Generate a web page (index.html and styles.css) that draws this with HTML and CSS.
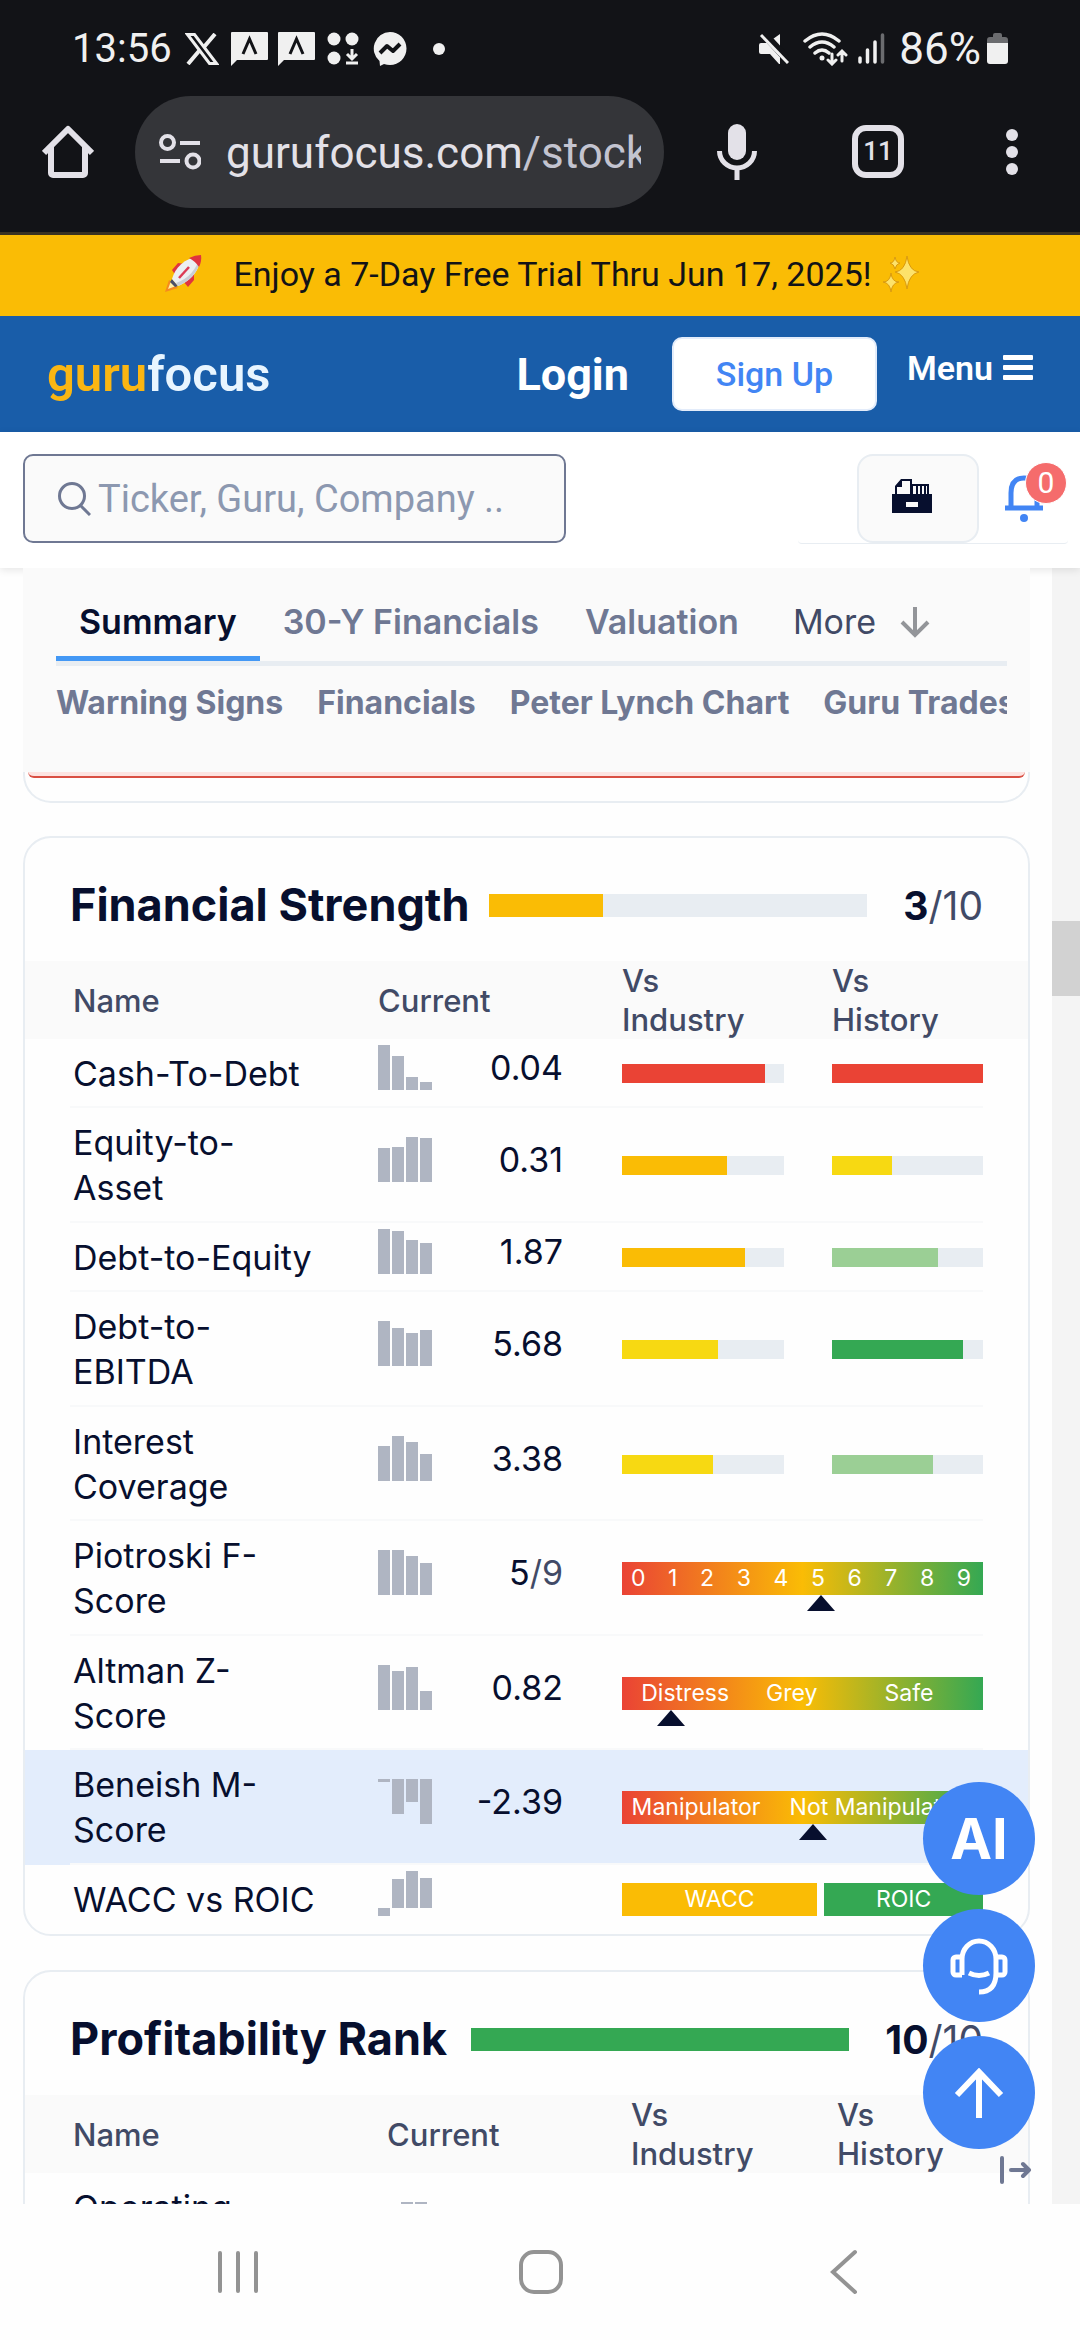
FILE: index.html
```html
<!DOCTYPE html>
<html lang="en">
<head>
    <meta charset="UTF-8">
    <meta name="viewport" content="width=device-width, initial-scale=1.0">
    <title>GuruFocus - Stock Summary</title>
    <link rel="stylesheet" href="styles.css">
</head>
<body>
    <!-- Status bar -->
    <div class="status-bar">
        <span class="time">13:56</span>
        <svg class="st-x" width="34" height="32" viewBox="0 0 34 32"><path fill="none" stroke="#f0f0f0" stroke-width="3" d="M2.500 1.500h7L31.500 30.500h-7z"/><path stroke="#f0f0f0" stroke-width="4" d="M30 1L19 14M14 18L3 31"/></svg>
        <svg class="st-chat" width="37" height="34" viewBox="0 0 37 34"><path fill="#f0f0f0" d="M1 0h35a1 1 0 011 1v26a1 1 0 01-1 1H6L0 34V1a1 1 0 011-1z"/><path fill="none" stroke="#121317" stroke-width="3" d="M12 22l6.500-15L25 22"/></svg>
        <svg class="st-chat" width="37" height="34" viewBox="0 0 37 34"><path fill="#f0f0f0" d="M1 0h35a1 1 0 011 1v26a1 1 0 01-1 1H6L0 34V1a1 1 0 011-1z"/><path fill="none" stroke="#121317" stroke-width="3" d="M12 22l6.500-15L25 22"/></svg>
        <svg class="st-dots" width="32" height="33" viewBox="0 0 32 33"><g fill="#f0f0f0"><circle cx="7" cy="7" r="6.500"/><circle cx="25" cy="7" r="6.500"/><circle cx="7" cy="26" r="6.500"/></g><path fill="none" stroke="#f0f0f0" stroke-width="3" d="M25 17v10M20 22l5 5 5-5M19 31h12"/></svg>
        <svg class="st-msg" width="34" height="34" viewBox="0 0 34 34"><path fill="#f0f0f0" d="M17 0a16.500 16.500 0 110 33c-2 0-4-.4-6-1l-4 2-.5-5A16.500 16.500 0 0117 0z"/><path fill="none" stroke="#121317" stroke-width="4" stroke-linejoin="round" d="M7 21l7-7 6 5 7-7"/></svg>
        <i class="st-more"></i>
        <span class="spacer"></span>
        <svg class="st-mute" width="30" height="31" viewBox="0 0 30 31"><path fill="#f0f0f0" d="M0 12a2 2 0 012-2h6l13 13v8h-1l-9-10H2a2 2 0 01-2-2zM21 1v14L12.500 7z"/><path stroke="#121317" stroke-width="8" d="M4 0l25 27"/><path stroke="#f0f0f0" stroke-width="3" d="M2 2l27 28"/></svg>
        <svg class="st-wifi" width="45" height="34" viewBox="0 0 45 34"><g fill="none" stroke="#f0f0f0" stroke-width="3.500" stroke-linecap="round"><path d="M2 9q17-14 34 0M7 15q12-10 24 0M12 21q7-6 14 0"/><path d="M29 22v9M25 28l4 4 4-4M39 29v-9M35 23l4-4 4 4" stroke-width="3"/></g><circle cx="19" cy="26" r="2.500" fill="#f0f0f0"/></svg>
        <svg class="st-signal" width="28" height="31" viewBox="0 0 28 31"><g stroke="#f0f0f0" stroke-width="3.500" stroke-linecap="round"><path d="M3 25v4M10.500 17v12M18 9v20"/><path stroke="#6b6c6f" d="M25.500 2v27"/></g></svg>
        <span class="battery-text">86%</span>
        <svg width="21" height="32" viewBox="0 0 21 32"><path fill="#6b6c6f" d="M6 2a2 2 0 012-2h5a2 2 0 012 2v2h3a3 3 0 013 3v3H0V7a3 3 0 013-3h3z"/><path fill="#f0f0f0" d="M0 10h21v18a3 3 0 01-3 3H3a3 3 0 01-3-3z"/></svg>
    </div>

    <!-- Browser toolbar -->
    <div class="toolbar">
        <button class="tool-btn" aria-label="Home"><svg width="52" height="54" viewBox="0 0 52 54"><path fill="none" stroke="#e3e1e8" stroke-width="6" stroke-linejoin="round" d="M2 28L26 4l24 24M9 22v26a2 2 0 002 2h30a2 2 0 002-2V22"/></svg></button>
        <button class="url-bar">
            <svg width="42" height="38" viewBox="0 0 42 38"><g fill="none" stroke="#e3e1e8" stroke-width="4"><circle cx="8.500" cy="9.500" r="6.500"/><path d="M21 10h20M1 28h20"/><circle cx="34" cy="28" r="6.500"/></g></svg>
            <span class="url-text">gurufocus.com<span class="path">/stock/</span></span>
        </button>
        <button class="tool-btn mic" aria-label="Voice search"><svg width="40" height="56" viewBox="0 0 40 56"><rect x="11" y="0" width="18" height="36" rx="9" fill="#e3e1e8"/><path fill="none" stroke="#e3e1e8" stroke-width="5" d="M2.500 27a17.500 17 0 0035 0M20 44v12"/></svg></button>
        <button class="tabs-count" aria-label="Open tabs">11</button>
        <button class="tool-btn" aria-label="More"><svg width="12" height="48" viewBox="0 0 12 48"><g fill="#e3e1e8"><circle cx="6" cy="7" r="6"/><circle cx="6" cy="24" r="6"/><circle cx="6" cy="41" r="6"/></g></svg></button>
    </div>

    <!-- Promo -->
    <a class="promo" href="#">
        <svg width="38" height="38" viewBox="0 0 38 38"><path fill="#f58a1f" d="M1 37l4-12 9 8z"/><path fill="#fff0a8" d="M4 34l3-8 5 5z"/><path fill="#e0343f" d="M8 15l6-7 7 1-9 12zM30 17v8l-6 7-5-6z"/><path fill="#4b4f68" d="M8 24l6 7-3 1-5-5z"/><path fill="#eceff2" d="M8 24C11 13 20 3 36 1c1 13-9 25-22 30z"/><path fill="#c9ced5" d="M36 1c1 13-9 25-22 30l-2-3C24 24 33 14 36 1z"/><path fill="#e0343f" d="M25 3q6-3 12-3 1 6-2 12-4-6-10-9z"/><path stroke="#dc3c55" stroke-width="2.500" d="M15 23l10-11"/></svg>
        <span>Enjoy a 7-Day Free Trial Thru Jun 17, 2025!</span>
        <svg class="sparkles" width="38" height="38" viewBox="0 0 38 38"><g fill="#fde26a" stroke="#d99a10" stroke-width="1"><path d="M25 1q2 15 12 16-10 2-12 17-2-15-12-17Q23 16 25 1zM9 18q1 9 8 9-7 1-8 10-1-9-8-10 7 0 8-9zM13 2q1 6 5 6-4 1-5 6-1-5-5-6 4 0 5-6z"/></g></svg>
    </a>

    <!-- Site nav -->
    <header class="site-nav">
        <a class="logo" href="#">guru<span>focus</span></a>
        <span class="spacer"></span>
        <a class="login" href="#">Login</a>
        <button class="signup">Sign Up</button>
        <button class="menu">Menu <svg width="30" height="26" viewBox="0 0 30 26"><g fill="#fff"><rect width="30" height="5" rx="1"/><rect y="10" width="30" height="5" rx="1"/><rect y="20" width="30" height="5" rx="1"/></g></svg></button>
    </header>

    <div class="search-row">
        <label class="search-box">
            <svg width="33" height="34" viewBox="0 0 33 34"><g fill="none" stroke="#6f7893" stroke-width="3"><circle cx="14" cy="14" r="12.500"/><path d="M22 23l10 10"/></g></svg>
            <input type="text" placeholder="Ticker, Guru, Company .." aria-label="Search">
        </label>
        <div class="quick">
            <button class="archive" aria-label="Portfolio"><svg width="40" height="36" viewBox="0 0 40 36"><path fill="#070f2e" d="M0 16h3V8l6-7h11v5h17v10h3v19H0z"/><path fill="#fafafa" d="M5 9h5V3h8v13H5zM21 8h3v8h-3zM26 8h2v8h-2zM30 8h2v8h-2zM34 8h1v8h-1zM14 24h12v5H14z"/></svg></button>
            <button class="bell" aria-label="Notifications">
                <svg width="38" height="48" viewBox="0 0 38 48"><path fill="none" stroke="#4285f4" stroke-width="5" d="M0 33h38M6 33V18Q6 3 19 3t13 15v15"/><circle cx="19" cy="43" r="4" fill="#4285f4"/></svg>
                <span class="badge">0</span>
            </button>
        </div>
    </div>

    <main class="viewport">
        <div class="page">
            <nav class="tab-panel">
                <div class="tabs">
                    <a class="tab active" href="#">Summary</a>
                    <a class="tab" href="#">30-Y Financials</a>
                    <a class="tab" href="#">Valuation</a>
                    <a class="tab more" href="#">More <svg width="30" height="31" viewBox="0 0 30 31"><path fill="none" stroke="#939599" stroke-width="4" d="M15 0v28M2 15l13 13 13-13"/></svg></a>
                </div>
                <div class="subtabs">
                    <a href="#">Warning Signs</a>
                    <a href="#">Financials</a>
                    <a href="#">Peter Lynch Chart</a>
                    <a href="#">Guru Trades</a>
                </div>
            </nav>
            <div class="card warning-card"><div class="alert"></div></div>

            <section class="card">
                <div class="card-head">
                    <h2>Financial Strength</h2>
                    <div class="bar rank"><i class="orange" style="width:30%"></i></div>
                    <span class="score"><b>3</b>/10</span>
                </div>
                <table>
                    <thead>
                        <tr><th class="c-name">Name</th><th class="c-current">Current</th><th class="c-industry">Vs<br>Industry</th><th>Vs<br>History</th></tr>
                    </thead>
                    <tbody>
                        <tr>
                            <td>Cash-To-Debt</td>
                            <td class="current"><div><svg class="spark" viewBox="0 0 54 45"><path d="M6 45V0M20 45V11M34 45V32M48 45V37"/></svg><span>0.04</span></div></td>
                            <td><div class="bar"><i class="red" style="width:88%"></i></div></td>
                            <td><div class="bar"><i class="red" style="width:100%"></i></div></td>
                        </tr>
                        <tr>
                            <td>Equity-to-<br>Asset</td>
                            <td class="current"><div><svg class="spark" viewBox="0 0 54 45"><path d="M6 45V11M20 45V10M34 45V0M48 45V1"/></svg><span>0.31</span></div></td>
                            <td><div class="bar"><i class="orange" style="width:65%"></i></div></td>
                            <td><div class="bar"><i class="yellow" style="width:40%"></i></div></td>
                        </tr>
                        <tr>
                            <td>Debt-to-Equity</td>
                            <td class="current"><div><svg class="spark" viewBox="0 0 54 45"><path d="M6 45V0M20 45V2M34 45V11M48 45V14"/></svg><span>1.87</span></div></td>
                            <td><div class="bar"><i class="orange" style="width:76%"></i></div></td>
                            <td><div class="bar"><i class="light-green" style="width:70%"></i></div></td>
                        </tr>
                        <tr>
                            <td>Debt-to-<br>EBITDA</td>
                            <td class="current"><div><svg class="spark" viewBox="0 0 54 45"><path d="M6 45V0M20 45V7M34 45V12M48 45V9"/></svg><span>5.68</span></div></td>
                            <td><div class="bar"><i class="yellow" style="width:59%"></i></div></td>
                            <td><div class="bar"><i class="green" style="width:87%"></i></div></td>
                        </tr>
                        <tr>
                            <td>Interest<br>Coverage</td>
                            <td class="current"><div><svg class="spark" viewBox="0 0 54 45"><path d="M6 45V10M20 45V0M34 45V6M48 45V18"/></svg><span>3.38</span></div></td>
                            <td><div class="bar"><i class="yellow" style="width:56%"></i></div></td>
                            <td><div class="bar"><i class="light-green" style="width:67%"></i></div></td>
                        </tr>
                        <tr>
                            <td>Piotroski F-<br>Score</td>
                            <td class="current"><div><svg class="spark" viewBox="0 0 54 45"><path d="M6 45V0M20 45V0M34 45V6M48 45V13"/></svg><span>5<em>/9</em></span></div></td>
                            <td colspan="2"><div class="scale digits"><span>0</span><span>1</span><span>2</span><span>3</span><span>4</span><span>5</span><span>6</span><span>7</span><span>8</span><span>9</span><i class="pointer" style="left:55%"></i></div></td>
                        </tr>
                        <tr>
                            <td>Altman Z-<br>Score</td>
                            <td class="current"><div><svg class="spark" viewBox="0 0 54 45"><path d="M6 45V0M20 45V6M34 45V2M48 45V26"/></svg><span>0.82</span></div></td>
                            <td colspan="2"><div class="scale zones"><span>Distress</span><span>Grey</span><span>Safe</span><i class="pointer" style="left:13.5%"></i></div></td>
                        </tr>
                        <tr class="highlight">
                            <td>Beneish M-<br>Score</td>
                            <td class="current"><div><svg class="spark" viewBox="0 0 54 45"><path d="M6 0V3M20 0V35M34 0V23M48 0V45"/></svg><span>-2.39</span></div></td>
                            <td colspan="2"><div class="scale manip"><span>Manipulator</span><span>Not Manipulator</span><i class="pointer" style="left:53%"></i></div></td>
                        </tr>
                        <tr class="last">
                            <td>WACC vs ROIC</td>
                            <td class="current"><div><svg class="spark" viewBox="0 0 54 45"><path d="M6 45V37M20 37V8M34 37V0M48 37V7"/></svg></div></td>
                            <td colspan="2"><div class="versus"><span class="orange" style="width:54%">WACC</span><span class="green" style="width:44%">ROIC</span></div></td>
                        </tr>
                    </tbody>
                </table>
            </section>

            <section class="card profitability">
                <div class="card-head">
                    <h2>Profitability Rank</h2>
                    <div class="bar rank"><i class="green" style="width:100%"></i></div>
                    <span class="score"><b>10</b>/10</span>
                </div>
                <table>
                    <thead>
                        <tr><th class="c-name">Name</th><th class="c-current">Current</th><th class="c-industry">Vs<br>Industry</th><th>Vs<br>History</th></tr>
                    </thead>
                    <tbody>
                        <tr>
                            <td>Operating<br>Margin %</td>
                            <td class="current"><div><svg class="spark" viewBox="0 0 54 45"><path d="M6 45V8M20 45V0M34 45V0M48 45V6"/></svg></div></td>
                            <td></td>
                            <td></td>
                        </tr>
                    </tbody>
                </table>
            </section>
        </div>
        <div class="scroll-track"><i></i></div>

        <!-- Floating buttons -->
        <div class="fabs">
            <button class="fab">AI</button>
            <button class="fab" aria-label="Support"><svg width="58" height="58" viewBox="0 0 58 58"><g fill="none" stroke="#fff" stroke-width="5"><path d="M12 38V22a17 18 0 0134 0v16M12 20H6a3 3 0 00-3 3v12a3 3 0 003 3h6M46 20h6a3 3 0 013 3v12a3 3 0 01-3 3h-6M46 36q0 19-17 19M19 36q10 5 20 0"/></g></svg></button>
            <button class="fab" aria-label="Back to top"><svg width="50" height="50" viewBox="0 0 50 50"><path fill="none" stroke="#fff" stroke-width="6" d="M25 50V5M3 27L25 4l22 23"/></svg></button>
            <button class="collapse" aria-label="Collapse"><svg width="32" height="28" viewBox="0 0 32 28"><path fill="none" stroke="#6f7893" stroke-width="4" stroke-linecap="round" stroke-linejoin="round" d="M2 2v24M11 14h18M23 8l6 6-6 6"/></svg></button>
        </div>
    </main>

    <!-- Android navigation -->
    <div class="android-nav">
        <button aria-label="Recents"><svg width="44" height="46" viewBox="0 0 44 46"><path stroke="#939393" stroke-width="4" stroke-linecap="round" d="M4 4v38M22 4v38M40 4v38"/></svg></button>
        <button aria-label="Home"><svg width="44" height="46" viewBox="0 0 44 46"><rect x="2" y="3" width="40" height="40" rx="13" fill="none" stroke="#939393" stroke-width="4"/></svg></button>
        <button aria-label="Back"><svg width="44" height="46" viewBox="0 0 44 46"><path fill="none" stroke="#939393" stroke-width="4" stroke-linecap="round" d="M34 3L12 23l22 20"/></svg></button>
    </div>
</body>
</html>
```

FILE: styles.css
```css
* {
    box-sizing: border-box;
}

body {
    margin: 0;
    height: 100vh;
    display: flex;
    flex-direction: column;
    overflow: hidden;
    background: #fefefe;
    color: #070f2e;
    font-family: Inter, sans-serif;
}

a {
    color: inherit;
    text-decoration: none;
}

button {
    border: 0;
    padding: 0;
    background: none;
    font: inherit;
    color: inherit;
}

svg {
    display: block;
    flex: none;
}

.spacer {
    flex: 1;
}

/* status bar */
.status-bar {
    display: flex;
    align-items: center;
    height: 97px;
    padding: 0 72px;
    background: #121317;
    color: #f0f0f0;
    font: 40px/48px Roboto, sans-serif;
}

.time {
    margin-right: 13px;
}

.st-x {
    margin-right: 12px;
}

.st-chat {
    margin-right: 10px;
}

.st-dots {
    margin: 0 14px 0 2px;
}

.st-more {
    width: 12px;
    height: 12px;
    margin-left: 26px;
    border-radius: 50%;
    background: #f0f0f0;
}

.st-mute {
    margin-right: 14px;
}

.st-wifi {
    margin-right: 9px;
}

.st-signal {
    margin-right: 14px;
}

.battery-text {
    margin-right: 6px;
    font-size: 44px;
}

/* browser toolbar */
.toolbar {
    display: flex;
    align-items: center;
    justify-content: space-between;
    height: 138px;
    padding: 0 62px 26px 42px;
    background: #121317;
    border-bottom: 3px solid #3a3222;
    color: #e3e1e8;
}

.url-bar {
    display: flex;
    align-items: center;
    gap: 25px;
    flex: 1;
    height: 112px;
    margin: 0 53px 0 41px;
    padding: 0 23px 0 24px;
    border-radius: 56px;
    background: #343539;
}

.url-text {
    flex: 1;
    width: 0;
    padding-top: 3px;
    overflow: hidden;
    white-space: nowrap;
    text-align: left;
    font: 44px/60px Roboto, sans-serif;
}

.url-text .path {
    color: #c3c4d0;
}

.mic {
    margin-right: 95px;
}

.tabs-count {
    width: 52px;
    height: 53px;
    margin-right: 102px;
    border: 6px solid #e3e1e8;
    border-radius: 14px;
    font: 500 26px/41px Roboto, sans-serif;
}

/* promo */
.promo {
    display: flex;
    align-items: center;
    justify-content: center;
    height: 81px;
    padding: 0 0 3px 4px;
    background: #fabc05;
    color: #121317;
    font: 34px/40px Roboto, sans-serif;
}

.promo span {
    margin: 0 10px 0 31px;
}

/* site nav */
.site-nav {
    display: flex;
    align-items: center;
    height: 116px;
    padding: 0 47px;
    background: #195da9;
    color: #fff;
    font-family: Roboto, sans-serif;
}

.logo {
    color: #fab613;
    font-size: 49px;
    font-weight: 600;
}

.logo span {
    color: #e8f5ff;
}

.login {
    margin-right: 43px;
    font-size: 45px;
    font-weight: 700;
}

.signup {
    width: 205px;
    height: 74px;
    margin-right: 30px;
    border: 2px solid #e3ecfa;
    border-radius: 10px;
    background: #fff;
    color: #4285f4;
    font-size: 34px;
    font-weight: 500;
}

.menu {
    display: flex;
    align-items: center;
    gap: 10px;
    padding-bottom: 12px;
    font-size: 34px;
    font-weight: 600;
}

/* search */
.search-row {
    position: relative;
    z-index: 1;
    display: flex;
    justify-content: space-between;
    padding: 22px 12px 24px 23px;
    background: #fff;
    box-shadow: 0 2px 8px rgba(0, 0, 0, 0.1);
}

.search-box {
    display: flex;
    align-items: center;
    gap: 7px;
    width: 52%;
    height: 89px;
    padding: 0 33px;
    border: 2px solid #6f7893;
    border-radius: 10px;
    background: #fafafa;
}

.search-box input {
    flex: 1;
    min-width: 0;
    padding: 0;
    border: 0;
    background: none;
    font: 38px/44px Roboto, sans-serif;
}

.search-box input::placeholder {
    color: #8c98b0;
}

.quick {
    display: flex;
    justify-content: flex-end;
    align-items: center;
    gap: 26px;
    width: 270px;
    height: 90px;
    padding-right: 25px;
    border-bottom: 1px solid #e8edf2;
    border-radius: 4px;
}

.archive {
    display: flex;
    align-items: center;
    justify-content: center;
    width: 122px;
    height: 89px;
    padding: 0 12px 5px 0;
    border: 2px solid #e8edf2;
    border-radius: 16px;
    background: #fafafa;
}

.bell {
    position: relative;
}

.badge {
    position: absolute;
    left: 20px;
    top: -13px;
    width: 42px;
    height: 42px;
    border: 1px solid #fff;
    border-radius: 21px;
    background: #f56c6c;
    color: #fff;
    font: 30px/40px Roboto, sans-serif;
}

/* page */
.viewport {
    position: relative;
    display: flex;
    flex: 1;
    min-height: 0;
    overflow: hidden;
}

.page {
    flex: 1;
    min-width: 0;
    padding: 0 22px 0 23px;
}

.scroll-track {
    flex: none;
    width: 28px;
    padding-top: 353px;
    background: #f4f4f4;
}

.scroll-track i {
    display: block;
    height: 75px;
    background: #d2d2d2;
}

.tab-panel {
    position: relative;
    z-index: 2;
    height: 204px;
    padding: 28px 23px 0 33px;
    background: #fafafa;
    color: #6f7893;
}

.tabs {
    display: flex;
    border-bottom: 5px solid #e8edf2;
}

.tab {
    padding: 0 23px 8px;
    border-bottom: 5px solid transparent;
    font-size: 34px;
    font-weight: 600;
    line-height: 52px;
}

.tab.active {
    border-color: #4398f5;
    color: #070f2e;
}

.tab.more {
    display: flex;
    align-items: center;
    gap: 24px;
    padding-left: 31px;
    color: #414a66;
    font-weight: 400;
}

.subtabs {
    display: flex;
    gap: 34px;
    overflow: hidden;
    padding-top: 17px;
    font-size: 32px;
    font-weight: 700;
    line-height: 40px;
    white-space: nowrap;
}

.card {
    margin-bottom: 34px;
    border: 2px solid #e8edf2;
    border-radius: 28px;
    overflow: hidden;
}

.warning-card {
    margin-bottom: 33px;
    padding: 0 3px 23px;
    border-top: 0;
    border-radius: 0 0 28px 28px;
}

.alert {
    height: 6px;
    border-bottom: 2px solid #d94f43;
    border-radius: 0 0 14px 14px;
    background: #fde3e1;
}

.card-head {
    display: flex;
    align-items: center;
    padding: 39px 45px 28px;
}

.card-head h2 {
    margin: 0 auto 0 0;
    font-size: 45px;
    font-weight: 700;
    line-height: 56px;
    white-space: nowrap;
}

.score {
    margin-left: 36px;
    color: #414a66;
    font-size: 39px;
}

.score b {
    color: #070f2e;
}

.bar {
    height: 19px;
    background: #e8edf2;
}

.bar i {
    display: block;
    height: 100%;
}

.bar.rank {
    flex: 0 1 378px;
    height: 23px;
}

.red { background: #ea4335; }
.orange { background: #fabc05; }
.yellow { background: #f7d912; }
.light-green { background: #9bcf95; }
.green { background: #34a853; }

table {
    width: 100%;
    table-layout: fixed;
    border-collapse: collapse;
}

th {
    padding: 0;
    background: #fafafa;
    color: #414a66;
    font-size: 31px;
    font-weight: 500;
    line-height: 39px;
    text-align: left;
}

.c-name { width: 353px; }
.c-current { width: 244px; }
.c-industry { width: 210px; }

.profitability .c-name { width: 362px; }
.profitability .c-industry { width: 206px; }

td {
    padding: 12px 48px 12px 0;
    font-size: 34px;
    line-height: 45px;
}

th:first-child,
td:first-child {
    padding-left: 48px;
    padding-right: 0;
}

tr:nth-child(even) td:first-child {
    padding-bottom: 13px;
}

td:last-child {
    padding-right: 45px;
}

tbody tr {
    background: linear-gradient(#f8f9fa, #f8f9fa) center bottom / calc(100% - 90px) 2px no-repeat;
}

tbody tr.highlight {
    background-color: #e3edfc;
}

tbody tr.last {
    background: none;
}

td.current {
    padding: 0 59px 12px 0;
}

td.current div {
    display: flex;
    align-items: center;
    justify-content: space-between;
    line-height: 45px;
}

td.current em {
    color: #414a66;
    font-style: normal;
}

.spark {
    width: 54px;
    height: 45px;
}

.spark path {
    stroke: #afb5c2;
    stroke-width: 12;
}

.scale {
    position: relative;
    display: grid;
    height: 33px;
    background: linear-gradient(90deg, #ea4335, #fabc05 50%, #34a853);
    color: #fff;
    font-size: 23px;
    line-height: 32px;
    text-align: center;
}

.digits {
    display: flex;
    justify-content: space-between;
    padding: 0 12px 0 9px;
}

.zones {
    grid-template-columns: 35fr 24fr 41fr;
}

.manip {
    grid-template-columns: 41fr 59fr;
    white-space: nowrap;
}

.pointer {
    position: absolute;
    top: 100%;
    margin-left: -14px;
    border: 14px solid transparent;
    border-top: 0;
    border-bottom: 16px solid #070f2e;
}

.versus {
    display: flex;
    justify-content: space-between;
    color: #fff;
    font-size: 23px;
    line-height: 33px;
    text-align: center;
}

/* floating buttons */
.fabs {
    position: absolute;
    right: 45px;
    bottom: 20px;
    display: flex;
    flex-direction: column;
    gap: 14px;
}

.fab {
    display: flex;
    align-items: center;
    justify-content: center;
    width: 112px;
    height: 113px;
    border-radius: 50%;
    background: #4285f4;
    color: #fff;
    font-size: 56px;
    font-weight: 700;
}

.collapse {
    align-self: flex-end;
    margin: -7px 3px 0 0;
}

/* android navigation */
.android-nav {
    display: flex;
    justify-content: space-between;
    align-items: center;
    height: 136px;
    padding: 0 215px 0 216px;
    background: #fefefe;
}
```
